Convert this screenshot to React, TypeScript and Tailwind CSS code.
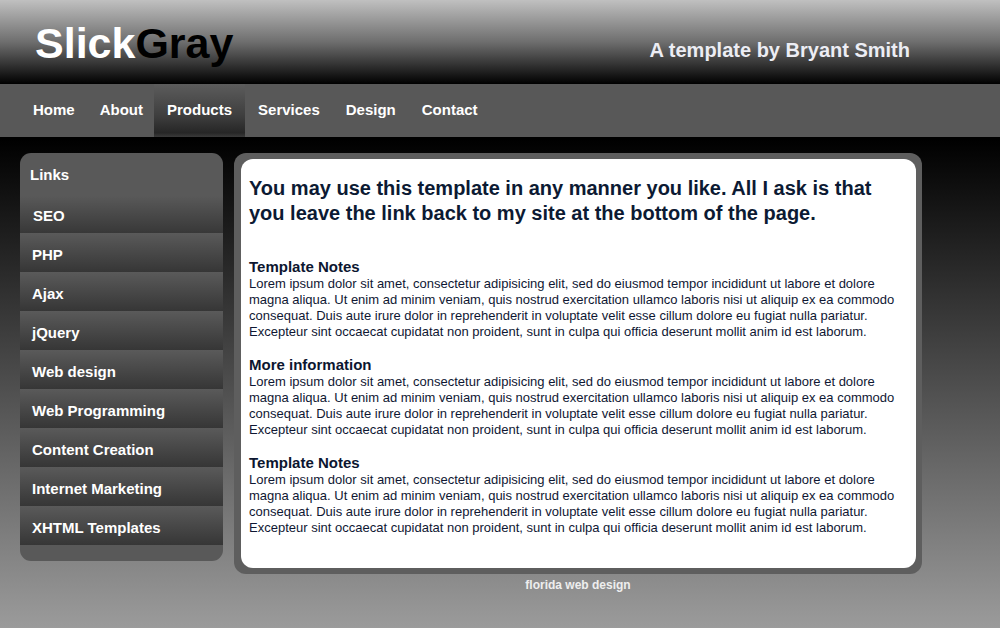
import React from "react";

const loremLines = [
  "Lorem ipsum dolor sit amet, consectetur adipisicing elit, sed do eiusmod tempor incididunt ut labore et dolore",
  "magna aliqua. Ut enim ad minim veniam, quis nostrud exercitation ullamco laboris nisi ut aliquip ex ea commodo",
  "consequat. Duis aute irure dolor in reprehenderit in voluptate velit esse cillum dolore eu fugiat nulla pariatur.",
  "Excepteur sint occaecat cupidatat non proident, sunt in culpa qui officia deserunt mollit anim id est laborum.",
];

const navItems = [
  { n: "Home", c: "pl-[13px] pr-[12px]" },
  { n: "About", c: "pl-[13px] pr-[11px]" },
  { n: "Products", c: "px-[13px]" },
  { n: "Services", c: "px-[13px]" },
  { n: "Design", c: "px-[13px]" },
  { n: "Contact", c: "px-[13px]" },
];
const links = [
  "SEO",
  "PHP",
  "Ajax",
  "jQuery",
  "Web design",
  "Web Programming",
  "Content Creation",
  "Internet Marketing",
  "XHTML Templates",
];

const sections = ["Template Notes", "More information", "Template Notes"];

export default function App() {
  return (
    <div
      className="w-[1000px] h-[628px] overflow-hidden flex flex-col"
      style={{ fontFamily: '"Liberation Sans", Arial, sans-serif' }}
    >
      {/* Header */}
      <div className="h-[84px] shrink-0 bg-[linear-gradient(to_bottom,#c0c0c0_0%,#6e6e6e_50%,#000000_100%)] flex items-center justify-between pl-[35px] pr-[90px]">
        <div className="text-[43px] font-bold leading-none mt-[2px]">
          <span className="text-white">Slick</span>
          <span className="text-black">Gray</span>
        </div>
        <div className="text-[20px] font-bold text-[#ecedf4] mt-[16px]">
          A template by Bryant Smith
        </div>
      </div>

      {/* Nav */}
      <div className="h-[55px] shrink-0 bg-[#585858] border-b-[2px] border-black flex pl-[20px]">
        {navItems.map(({ n, c }) => (
          <div
            key={n}
            className={
              n === "Products"
                ? `${c} h-full flex items-center text-[15px] font-bold text-white bg-[linear-gradient(to_bottom,#5c5c5c_0%,#3e3e3e_60%,#262626_92%,#3a3a3a_100%)]`
                : `${c} h-full flex items-center text-[15px] font-bold text-white`
            }
          >
            {n}
          </div>
        ))}
      </div>

      {/* Body */}
      <div className="flex-1 bg-[linear-gradient(to_bottom,#000000_0%,#9b9b9b_100%)] flex pl-[20px] pt-[14px] gap-[11px]">
        {/* Sidebar */}
        <div className="w-[203px] h-[408px] bg-[#595959] rounded-[11px] overflow-hidden flex flex-col">
          <div className="h-[43px] shrink-0 pl-[10px] flex items-center text-[15px] font-bold text-white pt-[1px]">
            Links
          </div>
          {links.map((l, i) => (
            <div
              key={l}
              className={
                i === 0
                  ? "h-[37px] shrink-0 pl-[13px] pt-[3px] flex items-center text-[15px] font-bold text-white bg-[linear-gradient(to_bottom,#595959_0%,#383838_100%)]"
                  : "h-[39px] shrink-0 pl-[12px] pt-[5px] flex items-center text-[15px] font-bold text-white bg-[linear-gradient(to_bottom,#5a5a5a_0%,#363636_100%)]"
              }
            >
              {l}
            </div>
          ))}
        </div>

        {/* Content */}
        <div className="flex flex-col items-center">
          <div className="w-[688px] bg-[#5e5e5e] rounded-[12px] pt-[6px] pb-[6px] pl-[7px] pr-[6px]">
            <div className="bg-white rounded-[12px] pl-[8px] pr-[8px] pt-[17px] pb-[32px]">
              <h1 className="text-[20px] font-bold leading-[25px] text-[#0c1a33]">
                You may use this template in any manner you like. All I ask is that
                <br />
                you leave the link back to my site at the bottom of the page.
              </h1>
              <div className="mt-[32px] flex flex-col gap-[16px]">
                {sections.map((s, i) => (
                  <div key={i}>
                    <div className="text-[15px] font-bold leading-[18px] text-[#0c1630]">
                      {s}
                    </div>
                    <p className="text-[13px] leading-[16px] text-[#0f1733]">
                      {loremLines.map((line, j) => (
                        <span key={j} className="block whitespace-nowrap">
                          {line}
                        </span>
                      ))}
                    </p>
                  </div>
                ))}
              </div>
            </div>
          </div>
          <div className="mt-[2px] text-[12px] font-bold text-[#eeeeee]">florida web design</div>
        </div>
      </div>
    </div>
  );
}
